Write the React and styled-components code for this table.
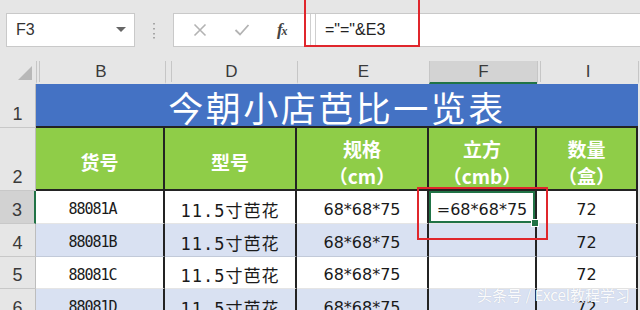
import React from 'react';
import styled, { createGlobalStyle } from 'styled-components';

const GRID = '36px 129px 132px 132px 108px 101px 1fr';
const GREEN_SEL = '#217346';

const GlobalStyle = createGlobalStyle`
  html, body {
    margin: 0;
    padding: 0;
    background: #e6e6e6;
  }
  body {
    font-family: "Liberation Sans", "Noto Sans CJK SC", sans-serif;
  }
`;

const Screen = styled.div`
  position: relative;
  width: 640px;
  height: 310px;
  overflow: hidden;
  background: #e6e6e6;
`;

const Toolbar = styled.div`
  display: flex;
  align-items: flex-start;
  height: 60px;
  padding: 13px 0 0 6px;
  box-sizing: border-box;
`;

const Field = styled.div`
  display: flex;
  align-items: center;
  height: 34px;
  box-sizing: border-box;
  background: #fff;
  border: 1px solid #c9c9c9;
`;

const NameBox = styled(Field)`
  width: 129px;
  padding: 0 8px 0 9px;
  justify-content: space-between;
  font-size: 16px;
  color: #333;
`;

const Grip = styled.div`
  width: 38px;
  display: flex;
  justify-content: center;
  padding-top: 10px;
`;

const ActionBox = styled(Field)`
  width: 132px;
  justify-content: space-around;
  padding: 0 4px 0 6px;
`;

const FxLabel = styled.span`
  font-family: "Liberation Serif", serif;
  font-style: italic;
  font-weight: bold;
  font-size: 17px;
  color: #444;
  letter-spacing: -1px;

  small {
    font-size: 12px;
  }
`;

const FormulaBox = styled(Field)`
  flex: 1;
  border-right: none;
  padding-left: 4px;
  gap: 9px;
  font-size: 16px;
  color: #222;
`;

const Handle = styled.span`
  width: 4px;
  height: 32px;
  border-left: 1px solid #cfcfcf;
  border-right: 1px solid #cfcfcf;
`;

const Sheet = styled.div`
  display: flex;
  flex-direction: column;
`;

const GridRow = styled.div`
  display: grid;
  grid-template-columns: ${GRID};
  height: ${p => p.$h}px;
  flex-shrink: 0;
`;

const Corner = styled.div`
  display: flex;
  align-items: flex-end;
  justify-content: flex-end;
  padding: 0 4px 4px 0;
`;

const ColHead = styled.div`
  display: flex;
  align-items: center;
  justify-content: center;
  font-size: 17px;
  color: #3a3a3a;
  border-left: 1px solid #c6c6c6;
  background: ${p => (p.$active ? '#d3d3d3' : '#e6e6e6')};
  border-bottom: 2px solid ${p => (p.$active ? GREEN_SEL : 'transparent')};
  box-shadow: ${p => (p.$hidden ? `inset ${p.$hidden}px 0 0 #e6e6e6, inset ${p.$hidden + 1}px 0 0 #c6c6c6` : 'none')};
  margin-top: 1px;
`;

const RowHead = styled.div`
  display: flex;
  align-items: flex-end;
  justify-content: center;
  padding-bottom: 2px;
  box-sizing: border-box;
  font-size: 18px;
  color: #3a3a3a;
  background: ${p => (p.$active ? '#d2d2d2' : '#e6e6e6')};
  border-bottom: 1px solid #c8c8c8;
  border-right: ${p => (p.$active ? `2px solid ${GREEN_SEL}` : '1px solid #bdbdbd')};
`;

const TitleCell = styled.div`
  grid-column: 2 / span 5;
  display: flex;
  align-items: flex-end;
  justify-content: center;
  padding-bottom: 2px;
  box-sizing: border-box;
  background: #4472c4;
  border-bottom: 2px solid #232323;
  color: #fff;
  font-family: "Noto Sans CJK SC", sans-serif;
  font-size: 35px;
  letter-spacing: 2.5px;
  line-height: 1;
`;

const HeadCell = styled.div`
  display: flex;
  flex-direction: column;
  align-items: center;
  justify-content: center;
  box-sizing: border-box;
  background: #8fcd48;
  border-right: 2px solid #232323;
  border-bottom: 2px solid #232323;
  color: #fff;
  font-family: "Noto Sans CJK SC", sans-serif;
  font-weight: bold;
  font-size: 19px;
  line-height: 27px;
  padding-top: 6px;
`;

const DataCell = styled.div`
  position: relative;
  display: flex;
  align-items: center;
  justify-content: center;
  box-sizing: border-box;
  padding: 4px ${p => p.$shift || 0}px 0 0;
  background: ${p => (p.$alt ? '#d9e1f2' : '#fff')};
  border-right: 2px solid #232323;
  border-bottom: 1px solid rgba(0, 0, 0, 0.1);
  color: #1a1a1a;
  font-family: ${p => (p.$mono
    ? '"DejaVu Sans Mono", "Noto Sans CJK SC", monospace'
    : '"DejaVu Sans", sans-serif')};
  font-size: ${p => (p.$size || 16)}px;
  letter-spacing: ${p => (p.$mono ? `${p.$mono}px` : '0')};
  white-space: nowrap;

  ${p => p.$selected && `
    box-shadow: inset 0 0 0 2px ${GREEN_SEL};
    &::after {
      content: '';
      position: absolute;
      right: -4px;
      bottom: -4px;
      width: 6px;
      height: 6px;
      background: ${GREEN_SEL};
      border: 1px solid #fff;
      z-index: 2;
    }
  `}
`;

const Mark = styled.div`
  position: absolute;
  left: ${p => p.$x}px;
  top: ${p => p.$y}px;
  width: ${p => p.$w}px;
  height: ${p => p.$h}px;
  border: 2.5px solid #e0262c;
  box-sizing: border-box;
  z-index: 5;
`;

const Watermark = styled.div`
  position: absolute;
  right: 10px;
  bottom: 5px;
  color: rgba(255, 255, 255, 0.95);
  font-family: "Noto Sans CJK SC", sans-serif;
  font-size: 15px;
  text-shadow: 0 0 1px rgba(0, 0, 0, 0.15);
  z-index: 6;
`;

const DropArrow = () => (
  <svg width="10" height="6" viewBox="0 0 10 6">
    <path d="M0 0 L10 0 L5 5 Z" fill="#666" />
  </svg>
);

const Dots = () => (
  <svg width="4" height="16" viewBox="0 0 4 16">
    {[1, 6, 11, 15].map(y => <rect key={y} x="1" y={y - 1} width="2" height="1.5" fill="#a6a6a6" />)}
  </svg>
);

const CancelIcon = () => (
  <svg width="14" height="14" viewBox="0 0 14 14">
    <path d="M1.5 1.5 L12.5 12.5 M12.5 1.5 L1.5 12.5" stroke="#b3b3b3" strokeWidth="1.6" fill="none" />
  </svg>
);

const EnterIcon = () => (
  <svg width="16" height="14" viewBox="0 0 16 14">
    <path d="M1.5 7 L6 11.5 L14.5 2" stroke="#b3b3b3" strokeWidth="1.8" fill="none" />
  </svg>
);

const CornerTri = () => (
  <svg width="14" height="14" viewBox="0 0 14 14">
    <path d="M14 0 L14 14 L0 14 Z" fill="#b8b8b8" />
  </svg>
);

const columns = [
  { label: 'B', hidden: 2 },
  { label: 'D', hidden: 5 },
  { label: 'E' },
  { label: 'F', active: true },
  { label: 'I', hidden: 2 },
];

const headers = [['货号'], ['型号'], ['规格', '（cm）'], ['立方', '（cmb）'], ['数量', '（盒）']];

const rows = [
  { n: 3, code: '88081A', h: 33, f: '=68*68*75' },
  { n: 4, code: '88081B', h: 33, alt: true },
  { n: 5, code: '88081C', h: 32 },
  { n: 6, code: '88081D', h: 33, alt: true },
];

const App = () => (
  <Screen>
    <GlobalStyle />
    <Toolbar>
      <NameBox>
        <span>F3</span>
        <DropArrow />
      </NameBox>
      <Grip><Dots /></Grip>
      <ActionBox>
        <CancelIcon />
        <EnterIcon />
        <FxLabel>f<small>x</small></FxLabel>
      </ActionBox>
      <FormulaBox>
        <Handle />
        <span>="="&amp;E3</span>
      </FormulaBox>
    </Toolbar>

    <Sheet>
      <GridRow $h={24}>
        <Corner><CornerTri /></Corner>
        {columns.map(c => (
          <ColHead key={c.label} $active={c.active} $hidden={c.hidden}>{c.label}</ColHead>
        ))}
        <ColHead />
      </GridRow>

      <GridRow $h={44}>
        <RowHead>1</RowHead>
        <TitleCell>今朝小店芭比一览表</TitleCell>
      </GridRow>

      <GridRow $h={63}>
        <RowHead>2</RowHead>
        {headers.map(lines => (
          <HeadCell key={lines[0]}>
            {lines.map(l => <span key={l}>{l}</span>)}
          </HeadCell>
        ))}
      </GridRow>

      {rows.map(r => (
        <GridRow key={r.n} $h={r.h}>
          <RowHead $active={r.n === 3}>{r.n}</RowHead>
          <DataCell $alt={r.alt} $mono={-1} $size={15} $shift={14}>{r.code}</DataCell>
          <DataCell $alt={r.alt} $mono={1} $size={17}>11.5寸芭花</DataCell>
          <DataCell $alt={r.alt}>68*68*75</DataCell>
          <DataCell $alt={r.alt} $selected={r.n === 3}>{r.f}</DataCell>
          <DataCell $alt={r.alt}>72</DataCell>
        </GridRow>
      ))}
    </Sheet>

    <Mark $x={304} $y={-3} $w={116} $h={50} />
    <Mark $x={417} $y={187} $w={131} $h={53} />
    <Watermark>头条号 / Excel教程学习</Watermark>
  </Screen>
);

export default App;
